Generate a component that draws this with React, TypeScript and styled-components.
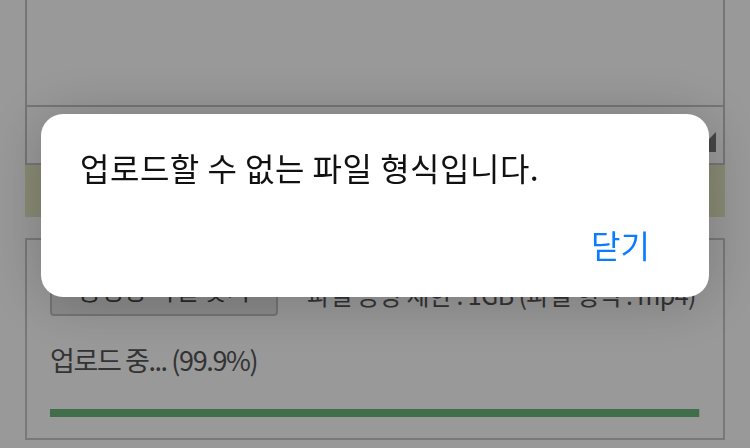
import styled, { createGlobalStyle } from "styled-components";

const GlobalStyle = createGlobalStyle`
  html, body {
    margin: 0;
    padding: 0;
    background: #ffffff;
    font-family: "Noto Sans CJK KR", "Noto Sans", sans-serif;
    overflow: hidden;
  }
`;

const Page = styled.div`
  display: flex;
  flex-direction: column;
  padding: 0 25px;
  height: 448px;
`;

const PreviewBox = styled.div`
  height: 107px;
  border: 2px solid #c4c4c4;
  border-top: none;
  box-sizing: border-box;
`;

const SelectRow = styled.div`
  height: 58px;
  border: 2px solid #c4c4c4;
  border-top: none;
  box-sizing: border-box;
  display: flex;
  align-items: flex-end;
  justify-content: flex-end;
  padding: 0 7px 11px 0;
`;

const NoticeStrip = styled.div`
  height: 52px;
  background: #e6e8c2;
  margin-bottom: 21px;
`;

const UploadBox = styled.div`
  border: 2px solid #c8c8c8;
  height: 202px;
  box-sizing: border-box;
  padding: 22px 23px 0;
  display: flex;
  flex-direction: column;
`;

const FileRow = styled.div`
  display: flex;
  align-items: center;
  gap: 29px;
`;

const PickButton = styled.div`
  width: 228px;
  height: 54px;
  box-sizing: border-box;
  border: 2px solid #c2c2c2;
  border-radius: 4px;
  background: #e8e8e8;
  display: flex;
  align-items: center;
  justify-content: center;
  font-size: 25px;
  letter-spacing: 0;
  color: #444;
`;

const HintText = styled.span`
  font-size: 25px;
  letter-spacing: -0.6px;
  color: #555;
  padding-top: 10px;
  white-space: nowrap;
`;

const Status = styled.div`
  margin-top: 26px;
  font-size: 27px;
  line-height: 36px;
  letter-spacing: -1.4px;
  color: #555;
`;

const Track = styled.div`
  margin-top: 31px;
  height: 8px;
  background: #e4e4e4;
`;

const Fill = styled.div`
  height: 100%;
  background: #6bb87e;
`;

const Overlay = styled.div`
  position: fixed;
  inset: 0;
  background: rgba(0, 0, 0, 0.4);
  display: flex;
  justify-content: center;
  align-items: flex-start;
  padding-top: 114px;
`;

const Dialog = styled.div`
  width: 668px;
  height: 183px;
  box-sizing: border-box;
  background: #ffffff;
  border-radius: 22px;
  box-shadow: 0 4px 60px rgba(0, 0, 0, 0.22);
  padding: 30px 59px 0 39px;
  display: flex;
  flex-direction: column;
`;

const Message = styled.p`
  margin: 0;
  font-size: 32px;
  line-height: 46px;
  letter-spacing: 0.5px;
  color: #111;
`;

const Actions = styled.div`
  display: flex;
  justify-content: flex-end;
  margin-top: 31px;
`;

const CloseButton = styled.button`
  border: none;
  background: none;
  padding: 0;
  font-family: inherit;
  font-size: 32px;
  line-height: 46px;
  color: #0a7cff;
`;

export default function App() {
  const progress = 99.9;
  return (
    <>
      <GlobalStyle />
      <Page>
        <PreviewBox />
        <SelectRow>
          <svg width="20" height="20" viewBox="0 0 20 20">
            <polygon points="20,0 20,20 0,20" fill="#767676" />
          </svg>
        </SelectRow>
        <NoticeStrip />
        <UploadBox>
          <FileRow>
            <PickButton>동영상 파일 찾기</PickButton>
            <HintText>파일 용량 제한 : 1GB (파일 형식 : mp4)</HintText>
          </FileRow>
          <Status>업로드 중... ({progress}%)</Status>
          <Track>
            <Fill style={{ width: `${progress}%` }} />
          </Track>
        </UploadBox>
      </Page>
      <Overlay>
        <Dialog>
          <Message>업로드할 수 없는 파일 형식입니다.</Message>
          <Actions>
            <CloseButton>닫기</CloseButton>
          </Actions>
        </Dialog>
      </Overlay>
    </>
  );
}
